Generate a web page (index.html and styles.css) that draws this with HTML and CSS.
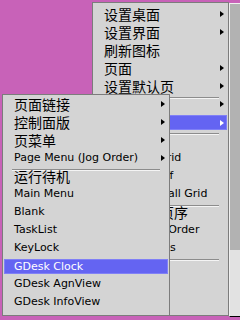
FILE: index.html
```html
<!DOCTYPE html>
<html>
<head>
    <title>Menu</title>
    <link rel="stylesheet" href="styles.css">
</head>
<body>
    <div class="menu menu-back">
        <div class="panel">
            <div class="item zh sub">设置桌面</div>
            <div class="item zh sub">设置界面</div>
            <div class="item zh">刷新图标</div>
            <div class="item zh sub">页面</div>
            <div class="item zh sub">设置默认页</div>
            <div class="sep"></div>
            <div class="item zh sub">图标排列</div>
            <div class="item zh sub active">图标</div>
            <div class="sep"></div>
            <div class="item">Show Grid</div>
            <div class="item">Show Big Grid</div>
            <div class="item">Icon Grid Off</div>
            <div class="item">Snap To Small Grid</div>
            <div class="sep"></div>
            <div class="item zh">调整图标页序</div>
            <div class="item">Default Jog Order</div>
            <div class="item">Icon Settings</div>
            <div class="sep"></div>
            <div class="item zh">关于</div>
            <div class="item zh">帮助</div>
            <div class="item zh">退出</div>
        </div>
        <div class="scroll">
            <div class="thumb"></div>
        </div>
    </div>

    <div class="menu menu-front">
        <div class="panel">
            <div class="item zh sub">页面链接</div>
            <div class="item zh sub">控制面版</div>
            <div class="item zh sub">页菜单</div>
            <div class="item sub">Page Menu (Jog Order)</div>
            <div class="sep"></div>
            <div class="item zh">运行待机</div>
            <div class="item">Main Menu</div>
            <div class="item">Blank</div>
            <div class="item">TaskList</div>
            <div class="item">KeyLock</div>
            <div class="sep"></div>
            <div class="item active">GDesk Clock</div>
            <div class="item">GDesk AgnView</div>
            <div class="item">GDesk InfoView</div>
        </div>
    </div>
</body>
</html>
```

FILE: styles.css
```css
body {
    margin: 0;
    width: 240px;
    height: 320px;
    overflow: hidden;
    position: relative;
    background: #c862b8;
    font-family: "DejaVu Sans", "Noto Sans CJK SC", sans-serif;
    font-size: 11px;
    color: #000;
}
.menu {
    position: absolute;
    display: flex;
    align-items: flex-start;
}
.menu-back {
    left: 92px;
    top: 2px;
}
.menu-front {
    left: 2px;
    top: 94px;
}
.panel {
    background: #d4d4d4;
    border: 1px solid #7c7c7c;
    padding: 2px 1px 4px;
}
.menu-back .panel {
    width: 133px;
    height: 306px;
}
.menu-front .panel {
    width: 164px;
    height: 216px;
    padding-top: 0;
}
.item {
    box-sizing: border-box;
    height: 18px;
    display: flex;
    align-items: center;
    justify-content: space-between;
    padding: 0 3px 0 10px;
    line-height: 14px;
    white-space: nowrap;
    overflow: hidden;
}
.item.zh {
    font-family: "Noto Sans CJK SC", sans-serif;
    font-size: 14px;
    line-height: 16px;
}
.item.sub::after {
    content: "";
    flex: none;
    border-left: 4px solid #000;
    border-top: 3px solid transparent;
    border-bottom: 3px solid transparent;
}
.item.active {
    color: #fff;
    background: #6464f2;
    border-top: 2px solid transparent;
    border-bottom: 1px solid transparent;
    background-clip: padding-box;
    box-shadow: inset 0 0 0 1px #8080f6;
}
.item.active::after {
    border-left-color: #fff;
}
.sep {
    height: 1px;
    margin: 2px 8px -4px;
    background: #8c8c8c;
    border-bottom: 1px solid #f4f4f4;
}
.scroll {
    width: 10px;
    height: 312px;
    margin-top: 1px;
    border-top: 1px solid #f0f0f0;
    border-left: 1px solid #f0f0f0;
    border-bottom: 1px solid #000;
    background: #e2e2e2;
}
.thumb {
    height: 246px;
    background: #b2b2b2;
}
```
